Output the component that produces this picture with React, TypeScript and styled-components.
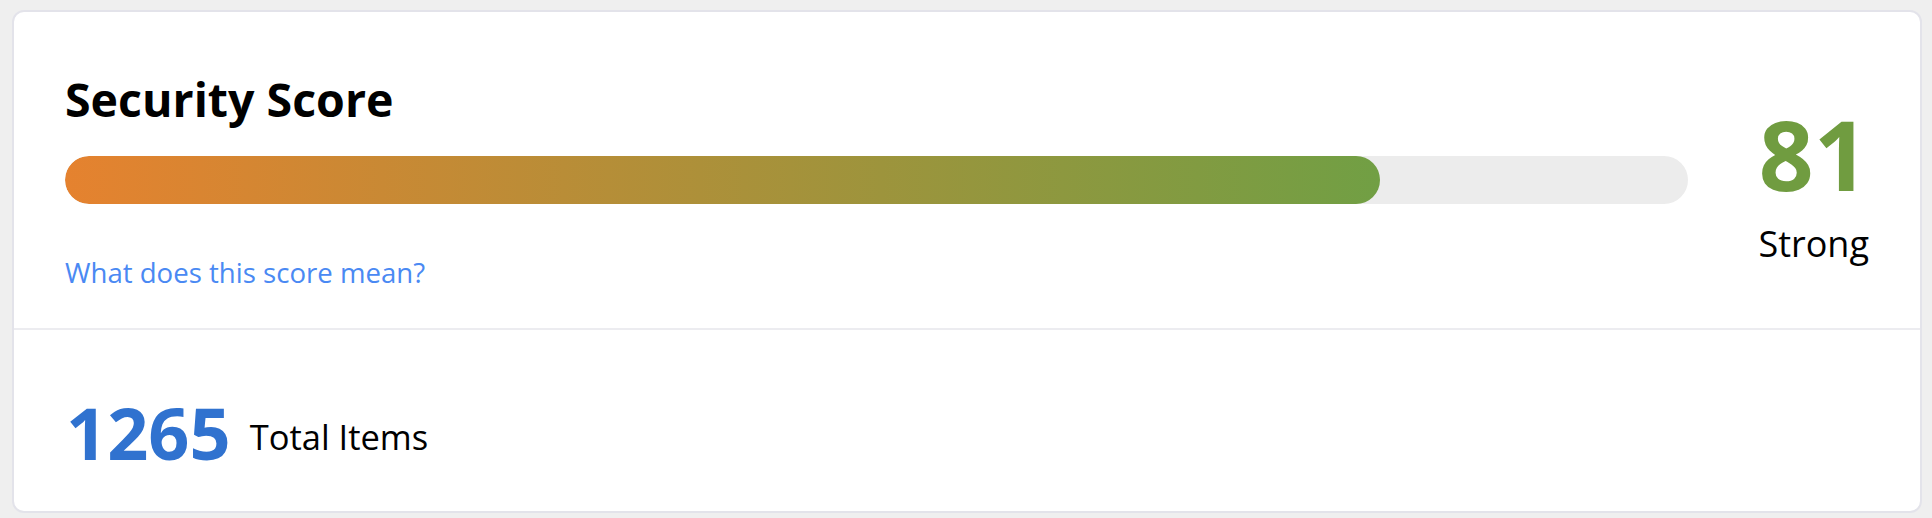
import React from "react";
import styled, { createGlobalStyle } from "styled-components";

const GlobalStyle = createGlobalStyle`
  html, body {
    margin: 0;
    padding: 0;
    background: #efefef;
  }
  body {
    font-family: "Open Sans", "Noto Sans", "Liberation Sans", sans-serif;
    color: #000;
  }
`;

const Page = styled.div`
  padding: 10px 10px 5px 12px;
`;

const Card = styled.section`
  background: #ffffff;
  border: 2px solid #e3e3ea;
  border-radius: 12px;
  overflow: hidden;
`;

const ScoreSection = styled.div`
  display: flex;
  align-items: center;
  gap: 70px;
  padding: 58px 51px 38px 51px;
  border-bottom: 2px solid #ececf0;
`;

const ScoreMain = styled.div`
  flex: 1;
  display: flex;
  flex-direction: column;
`;

const Title = styled.h2`
  margin: 0;
  font-size: 46.5px;
  line-height: 58px;
  font-weight: 700;
  color: #000;
`;

const Track = styled.div`
  margin-top: 28px;
  height: 48px;
  border-radius: 24px;
  background: #ececec;
  overflow: hidden;
`;

const Fill = styled.div`
  height: 100%;
  border-radius: 24px;
  background: linear-gradient(to right, #e5822f, #719f44);
`;

const HelpLink = styled.a`
  margin-top: 50px;
  font-size: 27.6px;
  line-height: 36px;
  color: #4a89f3;
  text-decoration: none;
  align-self: flex-start;
  cursor: pointer;
`;

const ScoreSide = styled.div`
  display: flex;
  flex-direction: column;
  align-items: center;
  padding-top: 10px;
`;

const ScoreValue = styled.div<{ $color: string }>`
  font-size: 96px;
  line-height: 96px;
  font-weight: 700;
  color: ${(p) => p.$color};
`;

const ScoreLabel = styled.div`
  margin-top: 20px;
  font-size: 36px;
  line-height: 43px;
  font-weight: 500;
  color: #000;
`;

const TotalsSection = styled.div`
  display: flex;
  align-items: center;
  gap: 19px;
  padding: 66px 51px 43px 52px;
`;

const TotalValue = styled.div`
  font-size: 72px;
  line-height: 72px;
  font-weight: 700;
  color: #3072cf;
`;

const TotalLabel = styled.div`
  margin-top: 10px;
  font-size: 34.5px;
  line-height: 44px;
  font-weight: 400;
  color: #000;
`;

export default function App() {
  const score = 81;
  return (
    <>
      <GlobalStyle />
      <Page>
        <Card>
          <ScoreSection>
            <ScoreMain>
              <Title>Security Score</Title>
              <Track>
                <Fill style={{ width: `${score}%` }} />
              </Track>
              <HelpLink>What does this score mean?</HelpLink>
            </ScoreMain>
            <ScoreSide>
              <ScoreValue $color="#709c40">{score}</ScoreValue>
              <ScoreLabel>Strong</ScoreLabel>
            </ScoreSide>
          </ScoreSection>
          <TotalsSection>
            <TotalValue>1265</TotalValue>
            <TotalLabel>Total Items</TotalLabel>
          </TotalsSection>
        </Card>
      </Page>
    </>
  );
}
